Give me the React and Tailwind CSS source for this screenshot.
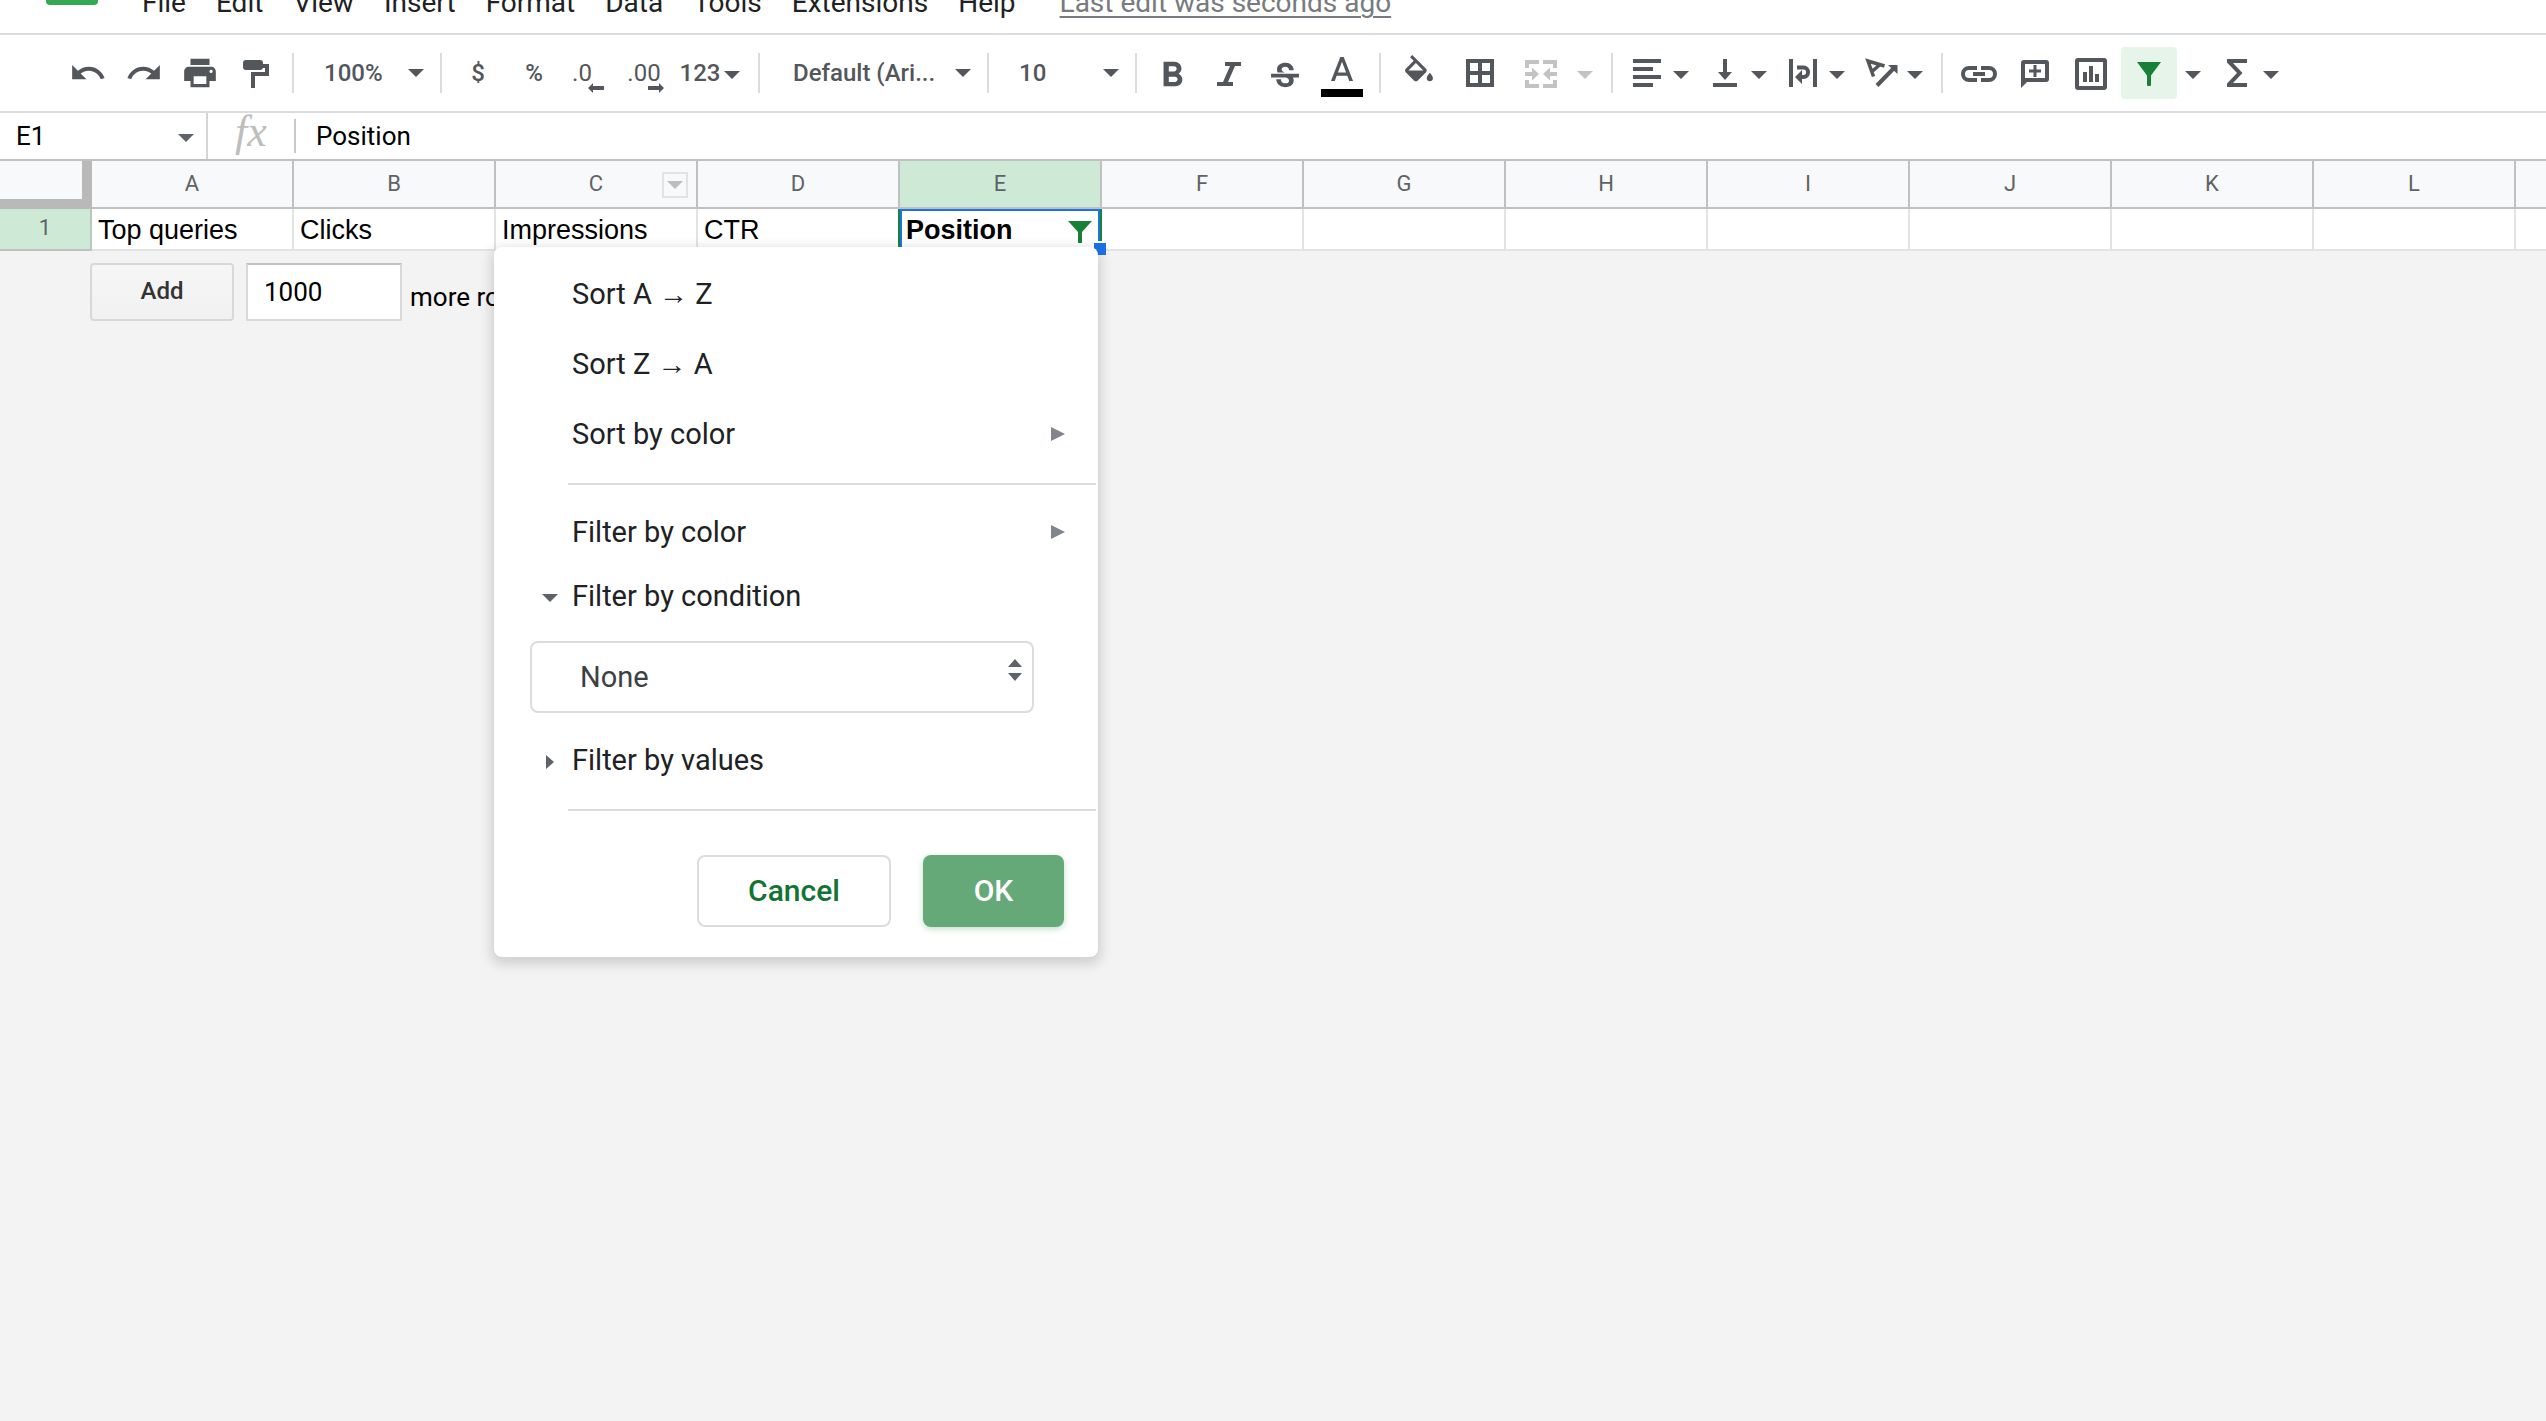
import React from "react";
import { MdUndo, MdRedo, MdPrint } from "react-icons/md";

const MENUS = ["File", "Edit", "View", "Insert", "Format", "Data", "Tools", "Extensions", "Help"];
const COLUMNS = ["A", "B", "C", "D", "E", "F", "G", "H", "I", "J", "K", "L"];
const ROW = ["Top queries", "Clicks", "Impressions", "CTR", "Position", "", "", "", "", "", "", ""];

function Icon({ children }) {
  return (
    <svg viewBox="0 0 40 40" className="size-10 shrink-0 overflow-visible" fill="currentColor" aria-hidden="true">
      {children}
    </svg>
  );
}

function Caret({ className = "" }) {
  return (
    <svg viewBox="0 0 16 8" className={`h-2 w-4 shrink-0 ${className}`} fill="currentColor" aria-hidden="true">
      <path d="M0 0h16l-8 8z" />
    </svg>
  );
}

function Tool({ label, className = "w-14", children, ...rest }) {
  return (
    <button type="button" aria-label={label} className={`flex h-[52px] shrink-0 items-center justify-center ${className}`} {...rest}>
      {children}
    </button>
  );
}

function ToolMenu({ label, children }) {
  return (
    <button type="button" aria-label={label} className="mr-[10px] flex h-[52px] shrink-0 items-center">
      <span className="flex w-[52px] justify-center">{children}</span>
      <Caret className="mt-1" />
    </button>
  );
}

function Divider() {
  return <div className="mx-2 h-10 w-0.5 shrink-0 bg-[#dadce0]" />;
}

function ToolSelect({ label, value, className, selectClass }) {
  return (
    <label className={`relative flex shrink-0 items-center ${className}`}>
      <select aria-label={label} className={`w-full appearance-none bg-transparent outline-none ${selectClass}`}>
        <option>{value}</option>
      </select>
      <Caret className="pointer-events-none absolute right-2" />
    </label>
  );
}

function MenuBar() {
  return (
    <header className="flex h-[35px] items-end overflow-hidden border-b-2 border-[#dadce0]">
      <div className="mb-7 ml-[46px] h-5 w-[52px] shrink-0 rounded bg-[#34a853]" />
      <nav className="mb-3.5 ml-11 flex gap-[30px] text-[28px] leading-8 text-[#202124]">
        {MENUS.map((m) => (
          <button key={m} type="button">{m}</button>
        ))}
      </nav>
      <a href="#history" className="mb-3.5 ml-11 text-[28px] leading-8 text-[#777a7e] underline decoration-2 underline-offset-4">
        Last edit was seconds ago
      </a>
    </header>
  );
}

function Toolbar() {
  return (
    <div role="toolbar" className="flex h-[78px] items-center overflow-hidden border-b-2 border-[#dadce0] pl-[60px] text-2xl font-medium text-[#53565a]">
      <Tool label="Undo"><MdUndo size={38} /></Tool>
      <Tool label="Redo"><MdRedo size={38} /></Tool>
      <Tool label="Print"><MdPrint size={38} /></Tool>
      <Tool label="Paint format">
        <Icon>
          <path d="M10 7h14a3 3 0 0 1 3 3v1h6v12H19v12h-4V19h14v-4h-2a3 3 0 0 1-3 2H10a3 3 0 0 1-3-3v-4a3 3 0 0 1 3-3z" />
        </Icon>
      </Tool>
      <Divider />
      <ToolSelect label="Zoom" value="100%" className="w-[130px]" selectClass="pl-[22px]" />
      <Divider />
      <Tool label="Format as currency">$</Tool>
      <Tool label="Format as percent">%</Tool>
      <Tool label="Decrease decimal places" className="relative w-14 font-normal">
        <span className="pr-4">.0</span>
        <svg viewBox="0 0 16 10" className="absolute right-3.5 bottom-1.5 h-2.5 w-4" fill="currentColor"><path d="M0 5l5-5v3h11v4H5v3z" /></svg>
      </Tool>
      <Tool label="Increase decimal places" className="relative w-14 font-normal">
        <span className="pr-1">.00</span>
        <svg viewBox="0 0 16 10" className="absolute right-2.5 bottom-1.5 h-2.5 w-4" fill="currentColor"><path d="M16 5l-5-5v3H0v4h11v3z" /></svg>
      </Tool>
      <Tool label="More formats" className="w-[76px] gap-1 pr-1">
        123
        <Caret className="mt-1" />
      </Tool>
      <Divider />
      <ToolSelect label="Font" value="Default (Ari..." className="w-[211px]" selectClass="pl-[25px]" />
      <Divider />
      <ToolSelect label="Font size" value="10" className="w-[130px]" selectClass="pl-[22px]" />
      <Divider />
      <Tool label="Bold">
        <Icon>
          <path transform="translate(-1.7 1.75) scale(1.75)" d="M15.6 10.79c.97-.67 1.65-1.77 1.65-2.79 0-2.26-1.75-4-4-4H7v14h7.04c2.09 0 3.71-1.7 3.71-3.79 0-1.52-.86-2.82-2.15-3.42zM10 6.5h3c.83 0 1.5.67 1.5 1.5s-.67 1.5-1.5 1.5h-3v-3zm3.5 9H10v-3h3.5c.83 0 1.5.67 1.5 1.5s-.67 1.5-1.5 1.5z" />
        </Icon>
      </Tool>
      <Tool label="Italic">
        <Icon><path d="M16 9h16v4h-6l-7 16h5v4H8v-4h6l7-16h-5z" /></Icon>
      </Tool>
      <Tool label="Strikethrough">
        <Icon>
          <path transform="translate(1.4 5) scale(1.55 1.62)" d="M6.85 7.08C6.85 4.37 9.45 3 12.24 3c1.64 0 3 .49 3.9 1.28.77.65 1.46 1.73 1.46 3.24h-3.01c0-.31-.05-.59-.15-.85-.29-.86-1.2-1.28-2.25-1.28-1.86 0-2.34 1.02-2.34 1.7 0 .48.25.88.74 1.21.38.25.77.48 1.41.7H7.39c-.21-.34-.54-.89-.54-1.92zM21 12V9.7H3V12h9.62c1.15.45 1.96.75 1.96 1.97 0 1-.81 1.67-2.28 1.67-1.54 0-2.93-.54-2.93-2.51H6.4c0 .55.08 1.13.24 1.58.81 2.29 3.29 3.3 5.67 3.3 2.27 0 5.3-.89 5.3-4.05 0-.3-.01-1.16-.48-1.96H21z" />
        </Icon>
      </Tool>
      <Tool label="Text color" className="w-[58px]">
        <Icon>
          <path transform="translate(-.4 -1) scale(1.7)" d="M11 3L5.5 17h2.25l1.12-3h6.25l1.12 3h2.25L13 3h-2zm-1.38 9L12 5.67 14.38 12H9.62z" />
          <path fill="#000" d="M-1 36h42v8H-1z" />
        </Icon>
      </Tool>
      <Divider />
      <Tool label="Fill color" className="w-[60px]">
        <Icon>
          <path transform="translate(1.4 2) scale(1.55)" d="M16.56 8.94 7.62 0 6.21 1.41l2.38 2.38-5.15 5.15c-.59.59-.59 1.54 0 2.12l5.5 5.5c.29.29.68.44 1.06.44s.77-.15 1.06-.44l5.5-5.5c.59-.58.59-1.53 0-2.12zM5.21 10 10 5.21 14.79 10H5.21zM19 11.5s-2 2.17-2 3.5c0 1.1.9 2 2 2s2-.9 2-2c0-1.33-2-3.5-2-3.5z" />
        </Icon>
      </Tool>
      <Tool label="Borders" className="w-[62px]">
        <Icon><path fillRule="evenodd" d="M6 6h28v28H6zM10 10v8h8v-8zM22 10v8h8v-8zM10 22v8h8v-8zM22 22v8h8v-8z" /></Icon>
      </Tool>
      <Tool label="Merge cells" className="w-[60px] text-[#c1c3c5]" disabled>
        <Icon>
          <path d="M4 7h14v4H8v4H4zM22 7h14v8h-4v-4H22zM4 27h4v4h10v4H4zM32 27h4v8H22v-4h10zM4 19h7v-4.500l7 6.500-7 6.500V23H4zM36 19h-7v-4.500L22 21l7 6.500V23h7z" />
        </Icon>
      </Tool>
      <Tool label="Select merge type" className="mr-1 w-7 text-[#c1c3c5]" disabled><Caret className="mt-1" /></Tool>
      <Divider />
      <ToolMenu label="Horizontal align">
        <Icon><path d="M6 6h28v4H6zM6 14h20v4H6zM6 22h28v4H6zM6 30h20v4H6z" /></Icon>
      </ToolMenu>
      <ToolMenu label="Vertical align">
        <Icon><path d="M18 6h4v13h5l-7 8-7-8h5zM10 30h20v4H10zM8 30h24v4H8z" /></Icon>
      </ToolMenu>
      <ToolMenu label="Text wrapping">
        <Icon>
          <path d="M6 6h4v28H6zM30 6h4v28h-4zM12 24l7-7v14z" />
          <path d="M14 14.500h6.500a4.500 4.700 0 0 1 0 9.500H18" fill="none" stroke="currentColor" strokeWidth="4" />
        </Icon>
      </ToolMenu>
      <ToolMenu label="Text rotation">
        <Icon>
          <path d="M23.500 13L7 8l5.500 15.500M19 11.500L10.500 19" fill="none" stroke="currentColor" strokeWidth="3.500" />
          <path d="M16 32.500L33 15" fill="none" stroke="currentColor" strokeWidth="4" />
          <path d="M27 12h9.500v9z" />
        </Icon>
      </ToolMenu>
      <Divider />
      <Tool label="Insert link">
        <Icon>
          <path d="M18 15h-8a5.500 5.500 0 0 0 0 12h8M22 15h8a5.500 5.500 0 0 1 0 12h-8" fill="none" stroke="currentColor" strokeWidth="4" />
          <path d="M14 19h12v4H14z" />
        </Icon>
      </Tool>
      <Tool label="Insert comment">
        <Icon>
          <path fillRule="evenodd" d="M9 7h22a3 3 0 0 1 3 3v16a3 3 0 0 1-3 3H12l-6 6V10a3 3 0 0 1 3-3zm1 4v14h20V11z" />
          <path d="M18.500 12h3v4.500H26v3h-4.500V24h-3v-4.500H14v-3h4.500z" />
        </Icon>
      </Tool>
      <Tool label="Insert chart">
        <Icon>
          <path fillRule="evenodd" d="M7 5h26a3 3 0 0 1 3 3v26a3 3 0 0 1-3 3H7a3 3 0 0 1-3-3V8a3 3 0 0 1 3-3zm1 4v24h24V9z" />
          <path d="M12 19h4v10h-4zM18 13h4v16h-4zM24 21h4v8h-4z" />
        </Icon>
      </Tool>
      <Tool label="Filter" aria-pressed="true" className="ml-0.5 w-14 rounded bg-[#e6f4ea] text-[#188038]">
        <Icon><path d="M8 9h24L22 22.500V32a1 1 0 0 1-1 1h-2a1 1 0 0 1-1-1v-9.500z" /></Icon>
      </Tool>
      <Tool label="Filter views" className="mr-[10px] ml-2 w-4"><Caret className="mt-1" /></Tool>
      <ToolMenu label="Functions">
        <Icon><path d="M10 6h20v4H16l9.500 10L16 30h14v4H10v-3.500L20 20 10 9.500z" /></Icon>
      </ToolMenu>
    </div>
  );
}

function FormulaBar() {
  return (
    <div className="flex h-12 items-center border-b-2 border-[#c0c0c0] text-[26px] text-black">
      <label className="flex h-full w-[208px] items-center border-r-2 border-[#d5d5d5] pr-3 pl-4">
        <input aria-label="Name box" defaultValue="E1" className="w-full min-w-0 outline-none" />
        <Caret className="mt-1 text-[#5f6368]" />
      </label>
      <span className="w-[86px] pb-2 text-center font-['Liberation_Serif'] text-[44px] leading-10 text-[#bdbdbd] italic">fx</span>
      <input aria-label="Formula" defaultValue="Position" className="h-[34px] grow border-l-2 border-[#c8c8c8] pl-5 outline-none" />
    </div>
  );
}

function Grid() {
  return (
    <table className="w-full table-fixed border-separate border-spacing-0 bg-white">
      <thead>
        <tr className="h-12 bg-[#f8f9fa] text-[22px] text-[#5f6368]">
          <th aria-label="Select all" className="w-[92px] border-r-[10px] border-b-[10px] border-[#b9b9b9]" />
          {COLUMNS.map((c) => (
            <th
              key={c}
              scope="col"
              className={`relative w-[202px] border-r-2 border-b-2 border-[#c0c0c0] p-0 pb-0.5 font-normal ${c === "E" ? "bg-[#ceead6]" : ""}`}
            >
              {c}
              {c === "C" && (
                <button type="button" aria-label="Column menu" className="absolute top-[11px] right-2 flex h-[26px] w-[26px] items-center justify-center border-2 border-[#e2e3e4] text-[#bdbdbd]">
                  <Caret className="w-3.5" />
                </button>
              )}
            </th>
          ))}
          <th className="border-b-2 border-[#c0c0c0]" />
        </tr>
      </thead>
      <tbody>
        <tr className="h-[42px]">
          <th scope="row" className="border-r-2 border-b-2 border-r-[#b7c9bc] border-b-[#c0c0c0] bg-[#ceead6] p-0 pb-0.5 text-[22px] leading-8 font-normal text-[#5f6368]">
            1
          </th>
          {ROW.map((text, i) =>
            i === 4 ? (
              <td key={i} className="relative border-r-2 border-b-2 border-[#e2e3e3] p-0 pt-0.5 pl-1.5 font-['Liberation_Sans'] text-[27px] leading-8 font-bold">
                {text}
                <div className="absolute top-0 -right-0.5 -bottom-0.5 -left-0.5 border-2 border-t-[#1a73e8] border-r-[#188038] border-b-[#1a73e8] border-l-[#188038]" />
                <div className="absolute inset-0 border-x-2 border-[#1a73e8]" />
                <button type="button" aria-label="Filter column" className="absolute top-2.5 right-2 text-[#188038]">
                  <svg viewBox="0 0 24 24" className="size-6" fill="currentColor"><path d="M0 2h24l-10 11v11h-4V13z" /></svg>
                </button>
                <span className="absolute -right-1.5 -bottom-1.5 size-[14px] border-t-2 border-l-2 border-white bg-[#1a73e8]" />
              </td>
            ) : (
              <td key={i} className="border-r-2 border-b-2 border-[#e2e3e3] p-0 pt-0.5 pl-1.5 font-['Liberation_Sans'] text-[27px] leading-8">
                {text}
              </td>
            )
          )}
          <td className="border-b-2 border-[#e2e3e3]" />
        </tr>
      </tbody>
    </table>
  );
}

function AddRows() {
  return (
    <form className="mt-3 ml-[90px] flex items-center text-[26px] text-black">
      <button type="button" className="h-[58px] w-36 rounded border-2 border-[#d8d8d8] bg-linear-to-b from-[#f6f6f6] to-[#f1f1f1] pb-0.5 text-2xl font-medium text-[#333]">
        Add
      </button>
      <input aria-label="Number of rows" defaultValue="1000" className="ml-3 h-[58px] w-[156px] border-2 border-[#d9d9d9] border-t-[#c0c0c0] bg-white pl-4 outline-none" />
      <span className="mt-2.5 ml-2">more rows at bottom.</span>
    </form>
  );
}

function MenuItem({ children, submenu }) {
  return (
    <button type="button" className="flex h-[70px] w-full items-center justify-between pr-[33px] pl-[78px] text-left">
      <span>{children}</span>
      {submenu && (
        <svg viewBox="0 0 14 14" className="size-3.5" fill="#80868b" aria-hidden="true"><path d="M0 0l14 7-14 7z" /></svg>
      )}
    </button>
  );
}

function Arrow() {
  return <span className="font-['Liberation_Sans']">→</span>;
}

function FilterMenu() {
  return (
    <div role="dialog" aria-label="Filter" className="absolute top-[86px] left-[494px] w-[604px] rounded-lg bg-white pt-3 pb-[30px] text-[29px] leading-10 text-[#202124] shadow-[0_4px_12px_3px_rgba(60,64,67,0.2)]">
      <MenuItem>Sort A <Arrow /> Z</MenuItem>
      <MenuItem>Sort Z <Arrow /> A</MenuItem>
      <MenuItem submenu>Sort by color</MenuItem>
      <hr className="mt-3.5 mr-0.5 mb-3 ml-[74px] border-t-2 border-[#dadce0]" />
      <MenuItem submenu>Filter by color</MenuItem>
      <button type="button" className="flex h-[58px] w-full items-center pl-12">
        <Caret className="mt-1 mr-3.5 text-[#5f6368]" />
        Filter by condition
      </button>
      <label className="relative mt-4 mr-16 ml-9 flex">
        <select aria-label="Condition" className="h-[72px] w-full appearance-none rounded-lg border-2 border-[#dadce0] bg-white pl-12 text-[#3c4043] outline-none">
          <option>None</option>
        </select>
        <svg viewBox="0 0 14 22" className="pointer-events-none absolute top-[18px] right-3 h-[22px] w-3.5" fill="#5f6368" aria-hidden="true">
          <path d="M0 8l7-8 7 8zM0 14h14l-7 8z" />
        </svg>
      </label>
      <button type="button" className="mt-3 flex h-[70px] w-full items-center pl-[52px]">
        <svg viewBox="0 0 8 14" className="mt-1 mr-[18px] h-3.5 w-2" fill="#5f6368" aria-hidden="true"><path d="M0 0l8 7-8 7z" /></svg>
        Filter by values
      </button>
      <hr className="mt-3.5 mr-0.5 ml-[74px] border-t-2 border-[#dadce0]" />
      <div className="mt-11 flex justify-end gap-8 pr-[34px] text-[30px] font-medium">
        <button type="button" className="h-[72px] w-[194px] rounded-lg border-2 border-[#dadce0] text-[#137333]">Cancel</button>
        <button type="button" className="h-[72px] w-[141px] rounded-lg bg-[#65a978] text-white shadow-[0_2px_6px_rgba(101,169,120,0.4)]">OK</button>
      </div>
    </div>
  );
}

export default function App() {
  return (
    <div className="min-h-screen overflow-hidden bg-[#f3f3f3] font-[Roboto,sans-serif]">
      <div className="bg-white">
        <MenuBar />
        <Toolbar />
        <FormulaBar />
      </div>
      <main className="relative">
        <Grid />
        <AddRows />
        <FilterMenu />
      </main>
    </div>
  );
}
